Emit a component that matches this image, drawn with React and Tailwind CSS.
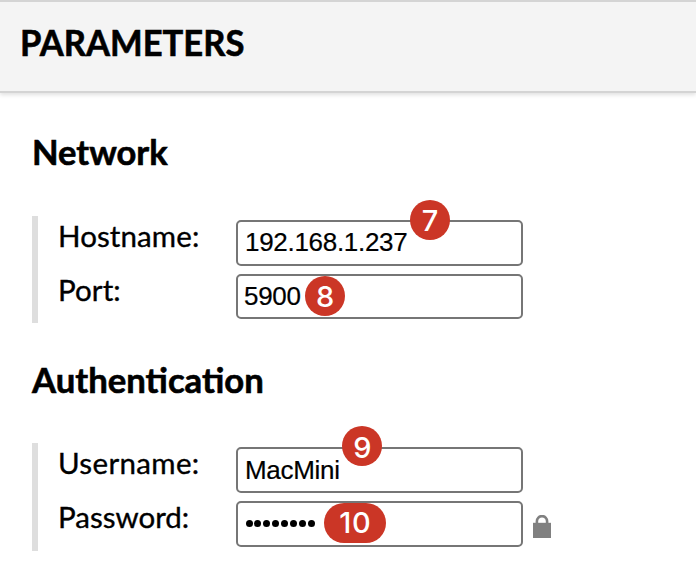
function Badge({ children, className }) {
  return (
    <span className={`absolute flex h-10 items-center justify-center rounded-full bg-[#cb3626] font-['Inter',sans-serif] text-[29px] font-medium leading-none text-white ${className}`}>
      {children}
    </span>
  );
}

function Field({ label, labelClass, value, valueClass = "-mt-[2px]", badge, badgeClass, boxClass = "h-[46px] pl-[7px]", lock, password }) {
  return (
    <div className="flex h-[54px] items-start">
      <div className="w-[198px] shrink-0 pl-5 text-[29.5px] leading-[40px] [-webkit-text-stroke:0.35px_black]">
        <span className={labelClass}>{label}</span>
      </div>
      <div className={`relative mt-1 flex w-[287px] items-center rounded-[5px] border-2 border-[#767676] bg-white font-['Liberation_Sans',Arial,sans-serif] text-[26px] leading-none tracking-[-0.3px] [-webkit-text-stroke:0.2px_black] ${boxClass}`}>
        {password ? (
          <span className="-mt-px ml-[0.5px] flex gap-[1.9px]">
            {[0, 1, 2, 3, 4, 5, 6, 7].map((i) => (
              <i key={i} className="size-[7px] rounded-full bg-black" />
            ))}
          </span>
        ) : (
          <span className={valueClass}>{value}</span>
        )}
        <Badge className={`[-webkit-text-stroke:0px] ${badgeClass}`}>{badge}</Badge>
      </div>
      {lock && (
        <svg viewBox="0 0 18 23" className="ml-[10px] mt-[18px] h-[23px] w-[18px]">
          <path d="M3.9 10V6.2a5.1 5.1 0 0 1 10.2 0V10" fill="none" stroke="#808080" strokeWidth="2.6" />
          <rect y="7.8" width="18" height="15.2" fill="#808080" />
        </svg>
      )}
    </div>
  );
}

export default function App() {
  return (
    <main className="h-[568px] w-[696px] overflow-hidden bg-white font-['Lato',sans-serif] text-black">
      <header className="h-[93px] border-y-2 border-[#d4d4d4] bg-[#f4f4f4] pl-5 pt-4 shadow-[0_2px_4px_rgba(0,0,0,0.12)]">
        <h1 className="w-fit origin-left scale-x-[0.935] text-[37px] font-bold leading-[48px] [-webkit-text-stroke:0.6px_black]">PARAMETERS</h1>
      </header>
      <h2 className="mt-[35px] pl-8 text-[34.5px] font-bold leading-[48px] [-webkit-text-stroke:0.6px_black]">Network</h2>
      <section className="ml-8 mt-[40px] h-[107px] border-l-[6px] border-[#dedede]">
        <Field label="Hostname:" labelClass="tracking-[0.1px]" value="192.168.1.237" badge="7" badgeClass="left-[172px] top-[-22.5px] w-10 pt-px" />
        <Field label="Port:" labelClass="tracking-[0.1px]" value="5900" badge="8" badgeClass="left-[67px] top-0 w-10 pt-px" boxClass="h-[45px] pl-[6px]" />
      </section>
      <h2 className="mt-[33px] pl-8 text-[34.7px] font-bold leading-[48px] [-webkit-text-stroke:0.6px_black]">Authentication</h2>
      <section className="ml-8 mt-[39px] h-[108px] border-l-[6px] border-[#dedede]">
        <Field label="Username:" labelClass="tracking-[0.35px]" value="MacMini" valueClass="mt-0" badge="9" badgeClass="left-[104.3px] top-[-23px] w-10 pt-[2px]" />
        <Field label="Password:" badge="10" badgeClass="left-[86.3px] top-[-0.5px] w-[62px] tracking-[0.6px]" lock password />
      </section>
    </main>
  );
}
